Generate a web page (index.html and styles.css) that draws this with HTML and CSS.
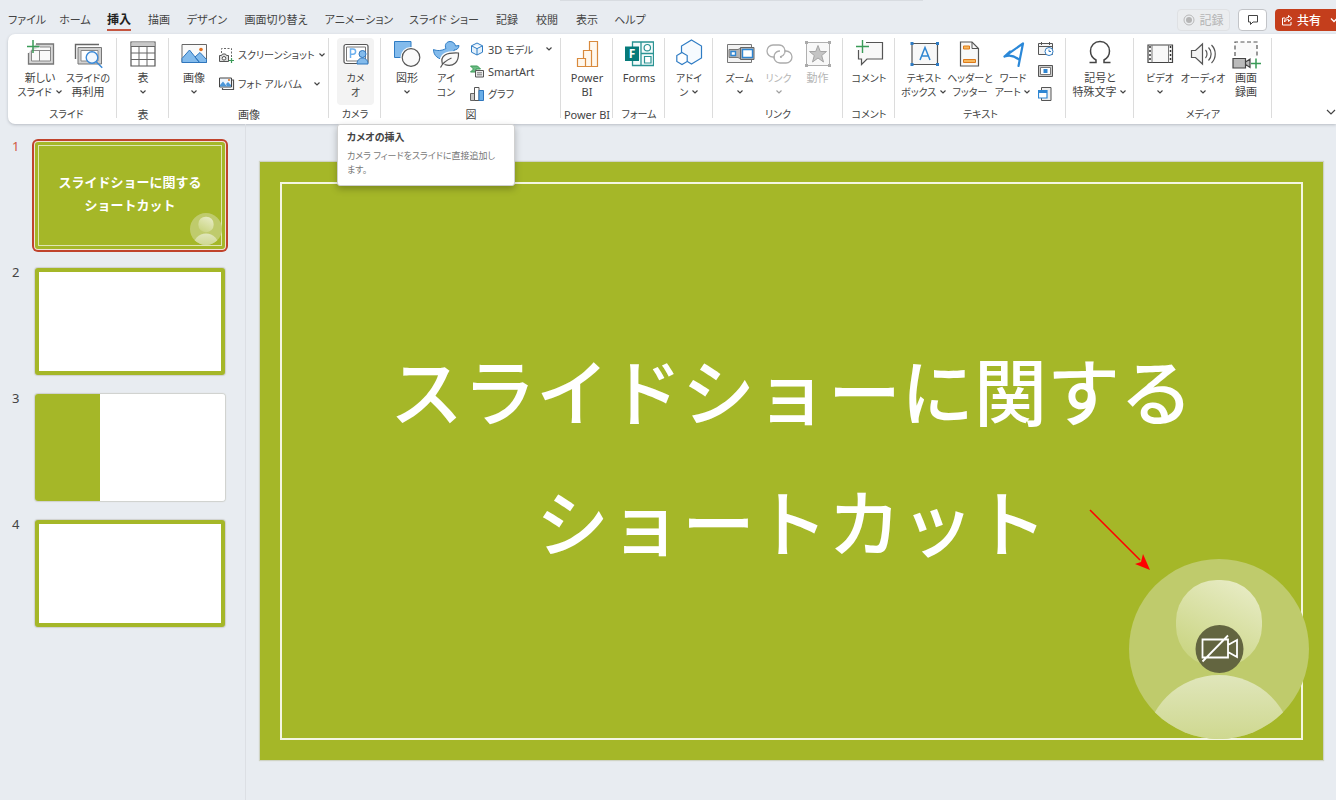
FILE: index.html
```html
<!DOCTYPE html>
<html lang="ja">
<head>
<meta charset="utf-8">
<meta name="viewport" content="width=device-width, initial-scale=1">
<title>スライドショーに関するショートカット</title>
<link rel="stylesheet" href="styles.css">
</head>
<body>
<svg class="defs" aria-hidden="true">
  <symbol id="chev" viewBox="0 0 8 8"><path d="M1.500 2.500 4 5l2.500-2.500" fill="none" stroke="#444" stroke-width="1.200"/></symbol>
  <linearGradient id="head" x1="0.800" y1="0" x2="0.300" y2="1"><stop offset="0" stop-color="#e8ecc6"/><stop offset="1" stop-color="#c9d480"/></linearGradient>
  <linearGradient id="torso" x1="0" y1="0" x2="0" y2="0.500"><stop offset="0" stop-color="#e0e6bb"/><stop offset="1" stop-color="#ccd689"/></linearGradient>
  <clipPath id="disc"><circle cx="90" cy="90" r="90"/></clipPath>
  <symbol id="person" viewBox="0 0 180 180">
    <circle cx="90" cy="90" r="90" fill="#bfcb6c"/>
    <rect x="47" y="21" width="86" height="87" rx="41" fill="url(#head)"/>
    <circle cx="90" cy="190" r="74" fill="url(#torso)" clip-path="url(#disc)"/>
  </symbol>
</svg>

<header class="topbar">
  <nav class="tabs">
    <a href="#">ファイル</a><a href="#">ホーム</a><a href="#" class="active">挿入</a><a href="#">描画</a><a href="#">デザイン</a><a href="#">画面切り替え</a><a href="#">アニメーション</a><a href="#">スライド ショー</a><a href="#">記録</a><a href="#">校閲</a><a href="#">表示</a><a href="#">ヘルプ</a>
  </nav>
  <div class="actions">
    <button class="record" disabled><svg width="12" height="12" viewBox="0 0 12 12"><circle cx="6" cy="6" r="5" fill="none" stroke="#b9b9b9"/><circle cx="6" cy="6" r="3" fill="#b5b5b5"/></svg>記録</button>
    <button class="note" aria-label="コメント"><svg width="12" height="12" viewBox="0 0 12 12"><path d="M1.500 1.500h9v6.500H6L3.500 10.500V8h-2z" fill="none" stroke="#444"/></svg></button>
    <button class="share"><svg width="12" height="12" viewBox="0 0 12 12"><path d="M4 4H1.500v7h8.500V8M3.500 8c0-3 1.500-4.500 4-4.500V1.500l3.500 3-3.500 3v-2C5.500 5.500 4.500 6.500 3.500 8z" fill="none" stroke="#fff"/></svg>共有<svg class="more" width="8" height="8" viewBox="0 0 8 8"><path d="M1 2.500 4 5.500l3-3" fill="none" stroke="#fff" stroke-width="1.300"/></svg></button>
  </div>
</header>

<section class="ribbon" aria-label="挿入">
  <div class="group g-slides">
    <div class="items">
      <button class="cmd"><svg class="ic" viewBox="0 0 30 30"><path d="M11 5h17.500v20h-25V14" fill="#d6d6d6" stroke="#777" stroke-width="1.300"/><path d="M6.500 11.500V22h19V8H15" fill="#fafafa" stroke="#888"/><path d="M6.500 11.500h19M14.500 11.500V22" fill="none" stroke="#888"/><path d="M8 1v13M2 7.500h12.500" stroke="#3a9b57" stroke-width="1.500"/></svg><span>新しい</span><span><span class="kana">スライド</span> <svg class="chev"><use href="#chev"/></svg></span></button>
      <button class="cmd"><svg class="ic" viewBox="0 0 30 30"><path d="M2.500 20V5.500H26" fill="none" stroke="#666" stroke-width="1.400"/><path d="M5 8.500h23.500V25H5z" fill="#d0d0d0" stroke="#777"/><path d="M8 11.500h17V22H8z" fill="#fff" stroke="#888"/><circle cx="19" cy="18.500" r="5.800" fill="#f2f8fe" stroke="#3b8ad8" stroke-width="1.400"/><path d="m23.200 22.700 6 6" stroke="#3b8ad8" stroke-width="1.500"/></svg><span class="kana">スライドの</span><span>再利用</span></button>
    </div>
    <div class="caption kana">スライド</div>
  </div>

  <div class="group g-one">
    <div class="items">
      <button class="cmd"><svg class="ic" viewBox="0 0 30 30"><path d="M3 3h24v24H3z" fill="#fff" stroke="#555" stroke-width="1.200"/><path d="M3.500 3.500h23V7h-23z" fill="#c8c8c8"/><path d="M3 7.500h24M3 14h24M3 20.500h24M11 7.500V27M19 7.500V27" stroke="#666" fill="none"/></svg><span>表</span><span><svg class="chev"><use href="#chev"/></svg></span></button>
    </div>
    <div class="caption">表</div>
  </div>

  <div class="group g-images">
    <div class="items">
      <button class="cmd"><svg class="ic" viewBox="0 0 30 30"><path d="M3 5.500h24.500v18H3z" fill="#fafafa" stroke="#666"/><path d="M3 19.500 10.500 11l10 12.500H3zM16 18l5-4.500 6.500 7v3H20.500z" fill="#83bbec" stroke="#2f76bd"/><circle cx="22" cy="10.500" r="1.800" fill="#e07020"/></svg><span>画像</span><span><svg class="chev"><use href="#chev"/></svg></span></button>
      <div class="stack">
        <button class="mini kana"><svg width="16" height="16" viewBox="0 0 16 16"><path d="M2.500 6V1.500h10V10" fill="none" stroke="#666" stroke-dasharray="2 1.500"/><path d="M.5 8.500h2l1-1.500h3l1 1.500h2v6h-9z" fill="#ddd" stroke="#555"/><circle cx="5" cy="11.300" r="1.800" fill="#fff" stroke="#555"/><path d="M10 13.500h5M12.500 11v5" stroke="#3a9b57" stroke-width="1.200"/></svg>スクリーンショット<svg class="chev"><use href="#chev"/></svg></button>
        <button class="mini kana"><svg width="16" height="16" viewBox="0 0 16 16"><path d="M12.500 4h2v9.500H3.500V12" fill="none" stroke="#555" stroke-width="1.200"/><path d="M.5 2h12v9H.5z" fill="#eef5fc" stroke="#444"/><path d="m1 9 3-3.500 4 5H1zM7 8l2-2 3 3v1.500H8z" fill="#4d97d8"/><circle cx="10" cy="4" r="1" fill="#e07020"/></svg>フォト アルバム<svg class="chev wide"><use href="#chev"/></svg></button>
      </div>
    </div>
    <div class="caption">画像</div>
  </div>

  <div class="group g-cameo">
    <div class="items">
      <button class="cmd hover" aria-describedby="tip"><svg class="ic" viewBox="0 0 30 30"><rect x="3" y="5.500" width="24" height="19" rx="2" fill="#fff" stroke="#555" stroke-width="1.200"/><path d="M5.500 8h19v14h-19z" fill="none" stroke="#777"/><path d="M9.500 19v-9h2.500a2.600 2.600 0 0 1 0 5.200H9.500" fill="none" stroke="#6cb0ee" stroke-width="1.500"/><circle cx="21.500" cy="15" r="3.500" fill="#83bbec" stroke="#2f76bd"/><path d="M16 25c0-8 11-8 11 0z" fill="#83bbec" stroke="#2f76bd"/></svg><span class="kana">カメ</span><span class="kana">オ</span></button>
    </div>
    <div class="caption kana">カメラ</div>
    <div class="tooltip" id="tip" role="tooltip"><strong>カメオの挿入</strong><p>カメラ フィードをスライドに直接追加し<br>ます。</p></div>
  </div>

  <div class="group g-shapes">
    <div class="items">
      <button class="cmd"><svg class="ic" viewBox="0 0 30 30"><path d="M2.500 2.500h16.500v16H2.500z" fill="#83bbec" stroke="#2f7cc4"/><circle cx="19" cy="18.500" r="10.500" fill="#fff"/><circle cx="19" cy="18.500" r="8.800" fill="#fafafa" stroke="#555" stroke-width="1.200"/></svg><span>図形</span><span><svg class="chev"><use href="#chev"/></svg></span></button>
      <button class="cmd"><svg class="ic" viewBox="0 0 30 30"><path d="M2.500 10.500c3.500 1.500 8 1.500 12.500-1-2-4 1-7 4-7s5 2 5.500 4.500l3.500-.500c0 3-2.500 4.500-5 4.500 1 6-4 9.500-9 9.500C7.500 20.500 2.500 17 2.500 10.500z" fill="#83bbec" stroke="#2f7cc4"/><path d="M11.500 25.500C8.500 16 16 13.500 27.500 14c.5 9-5 14.500-14 11.500" fill="#fff" stroke="#fff" stroke-width="4"/><path d="M11.500 25.500C8.500 16 16 13.500 27.500 14c.5 9-5 14.500-14 11.500" fill="#fafafa" stroke="#555" stroke-width="1.200"/><path d="M9.500 28.500c2-4 5-7 11-9.500" fill="none" stroke="#555" stroke-width="1.200"/></svg><span class="kana">アイ</span><span class="kana">コン</span></button>
      <div class="stack three">
        <button class="mini"><svg width="14" height="14" viewBox="0 0 14 14"><path d="m7 1 5.500 2.800v6.400L7 13l-5.500-2.800V3.800zM1.500 3.800 7 6.600l5.500-2.800M7 6.600V13" fill="#e4f1fc" stroke="#2f7cc4"/></svg><span>3D <span class="kana">モデル</span></span><svg class="chev wide"><use href="#chev"/></svg></button>
        <button class="mini"><svg width="14" height="14" viewBox="0 0 14 14"><path d="M.5 2h7l3 3H6v3H.5l3-3z" fill="#6dbb85" stroke="#3a9b57"/><path d="M5.500 6.500h8v6.500h-8z" fill="#eee" stroke="#555"/><path d="M7 8.800h5M7 10.800h5" stroke="#777"/></svg>SmartArt</button>
        <button class="mini kana"><svg width="14" height="14" viewBox="0 0 14 14"><path d="M.5 6.500h4v7h-4z" fill="#c8c8c8" stroke="#666"/><path d="M4.500.5h4.500v13H4.500z" fill="#fff" stroke="#555"/><path d="M9 3.500h4.500v10H9z" fill="#6aaee8" stroke="#2f76bd"/></svg>グラフ</button>
      </div>
    </div>
    <div class="caption">図</div>
  </div>

  <div class="group g-one">
    <div class="items">
      <button class="cmd"><svg class="ic" viewBox="0 0 30 30"><g fill="#fff8ee" stroke="#d98a3c" stroke-width="1.200"><path d="M17.500 2.500h8v25h-8z"/><path d="M11.500 11.500h8v16h-8z"/><path d="M5.500 19.500h8v8h-8z"/></g></svg><span>Power</span><span>BI</span></button>
    </div>
    <div class="caption">Power BI</div>
  </div>

  <div class="group g-one">
    <div class="items">
      <button class="cmd"><svg class="ic" viewBox="0 0 30 30"><path d="M8.500 3h21v23.500h-21zM17 3v23.500M17 14.500h12.500" fill="#f4fbfb" stroke="#2a9393" stroke-width="1.300"/><circle cx="23.300" cy="8.700" r="3.200" fill="#fff" stroke="#2a9393" stroke-width="1.200"/><path d="M20.500 17.500H27V24h-6.500z" fill="#fff" stroke="#2a9393" stroke-width="1.200"/><path d="M1 7.500h14V22H1z" fill="#067a7a"/><text x="8" y="19" text-anchor="middle" class="f">F</text></svg><span>Forms</span></button>
    </div>
    <div class="caption kana">フォーム</div>
  </div>

  <div class="group g-addin">
    <div class="items">
      <button class="cmd"><svg class="ic" viewBox="0 0 30 30"><path d="m17.500 1 10 6v12l-10 6-10-6V7z" fill="#f6fafe" stroke="#2f7cc4" stroke-width="1.200"/><path d="m8 13.500 5.200 3v6L8 25.500l-5.200-3v-6z" fill="#fff" stroke="#2f7cc4" stroke-width="1.200"/></svg><span class="kana">アドイ</span><span class="kana">ン <svg class="chev"><use href="#chev"/></svg></span></button>
    </div>
  </div>

  <div class="group g-links">
    <div class="items">
      <button class="cmd"><svg class="ic" viewBox="0 0 30 30"><path d="M2.500 5.500h24v18h-24z" fill="#f3f3f3" stroke="#777"/><path d="M4 10.500h9l4-2h3v12h-3l-4-2H4z" fill="#b4b4b4" stroke="#777"/><path d="M15.500 8.500h13.500v12H15.500z" fill="#b4b4b4" stroke="#666"/><path d="M6 12.500h4.500v4H6z" fill="#fff" stroke="#2f86d2" stroke-width="1.400"/><path d="M17.500 10.500h10v8h-10z" fill="#fff" stroke="#2f86d2" stroke-width="1.400"/></svg><span class="kana">ズーム</span><span><svg class="chev"><use href="#chev"/></svg></span></button>
      <button class="cmd" disabled><svg class="ic" viewBox="0 0 30 30"><g fill="none" stroke="#acacac" stroke-width="1.300"><path d="M11 18H9A6 6 0 0 1 9 6h6a6 6 0 0 1 5.500 8.500"/><path d="M18 18h-2"/><path d="M20 12h2a6 6 0 0 1 0 12h-6a6 6 0 0 1-5.500-8.500A6 6 0 0 1 16 12"/><path d="M20.500 14.500A6 6 0 0 1 16 18"/></g></svg><span class="kana">リンク</span><span><svg class="chev"><use href="#chev"/></svg></span></button>
      <button class="cmd" disabled><svg class="ic" viewBox="0 0 30 30"><path d="M3.500 3.500h23v23h-23z" fill="#f8f8f8" stroke="#b0b0b0"/><path d="M2 2h3v3H2zM25 2h3v3h-3zM2 25h3v3H2zM25 25h3v3h-3z" fill="#aaa"/><path d="m15 6.500 2.300 6h6.200l-4.800 4 1.800 6.500-5.500-4-5.500 4 1.800-6.500-4.800-4h6.200z" fill="#c4c4c4" stroke="#a4a4a4"/></svg><span>動作</span></button>
    </div>
    <div class="caption kana">リンク</div>
  </div>

  <div class="group g-one">
    <div class="items">
      <button class="cmd"><svg class="ic" viewBox="0 0 30 30"><path d="M12 3.500h16.500v16.500H13l-5.500 5.500V20h-3V11" fill="#f8f8f8" stroke="#555" stroke-width="1.200"/><path d="M8.500 1v13M2 7.500h13" stroke="#3a9b57" stroke-width="1.400"/></svg><span class="kana">コメント</span></button>
    </div>
    <div class="caption kana">コメント</div>
  </div>

  <div class="group g-text">
    <div class="items">
      <button class="cmd"><svg class="ic" viewBox="0 0 30 30"><path d="M3 4.500h25.500v21H3z" fill="#f8f8f8" stroke="#555" stroke-width="1.200"/><path d="M1.500 3h3v3h-3zM27 3h3v3h-3zM1.500 24h3v3h-3zM27 24h3v3h-3z" fill="#2f7cc4"/><path d="m11 21 5-12.500L21 21M12.500 17h7" fill="none" stroke="#2f86d2" stroke-width="1.500"/></svg><span class="kana">テキスト</span><span class="kana">ボックス <svg class="chev"><use href="#chev"/></svg></span></button>
      <button class="cmd"><svg class="ic" viewBox="0 0 30 30"><path d="M5.500 3h11.500l6.500 6.500V27h-18z" fill="#f8f8f8" stroke="#555" stroke-width="1.200"/><path d="M17 3v6.500h6.500" fill="none" stroke="#555"/><path d="M8.500 7h6v3h-6zM8.500 20.500h12v3h-12z" fill="#f7b85e" stroke="#dd7a1a"/></svg><span class="kana">ヘッダーと</span><span class="kana">フッター</span></button>
      <button class="cmd"><svg class="ic" viewBox="0 0 30 30"><path d="M12 12.500 6.500 17.500 25 4.500 20.500 27M6.500 17.500c5-2 10-1 15 3.500" fill="none" stroke="#2b88d8" stroke-width="2.200" stroke-linejoin="round" stroke-linecap="round"/></svg><span class="kana">ワード</span><span class="kana">アート <svg class="chev"><use href="#chev"/></svg></span></button>
      <div class="stack three">
        <button class="mini" aria-label="日付と時刻"><svg width="16" height="16" viewBox="0 0 16 16"><path d="M.5 2.500h14v11H.5zM.5 5.500h14M3.500 1v3M11.500 1v3" fill="#f4f4f4" stroke="#555"/><circle cx="11" cy="10.500" r="4" fill="#fff" stroke="#2f7cc4"/><path d="M11 8.500v2h2" fill="none" stroke="#2f7cc4"/></svg></button>
        <button class="mini" aria-label="スライド番号"><svg width="16" height="16" viewBox="0 0 16 16"><path d="M.5 2.500h14v11H.5z" fill="#ccc" stroke="#555"/><path d="M2.500 4.500h10v7h-10z" fill="#fff" stroke="#777"/><path d="M5.500 6h4v4h-4z" fill="#2f86d2"/></svg></button>
        <button class="mini" aria-label="オブジェクト"><svg width="16" height="16" viewBox="0 0 16 16"><path d="M3.500 4V1.500h9.500v13H3.500V12" fill="#eee" stroke="#555"/><path d="M.5 4.500h8.500v7.500H.5z" fill="#fff" stroke="#2f86d2" stroke-width="1.200"/><path d="M.5 5h8.500v2H.5z" fill="#2f86d2"/></svg></button>
      </div>
    </div>
    <div class="caption kana">テキスト</div>
  </div>

  <div class="group g-symbol">
    <div class="items">
      <button class="cmd"><svg class="ic" viewBox="0 0 30 30"><path d="M4.500 23.500H11v-2.500C7.500 19 5.500 16 5.500 12 5.500 6.500 9.500 2.500 15 2.500s9.500 4 9.500 9.500c0 4-2 7-5.500 9v2.500h6.500" fill="none" stroke="#444" stroke-width="1.500"/></svg><span>記号と</span><span>特殊文字 <svg class="chev"><use href="#chev"/></svg></span></button>
    </div>
  </div>

  <div class="group g-media">
    <div class="items">
      <button class="cmd"><svg class="ic" viewBox="0 0 30 30"><path d="M3 6h24.500v17.500H3z" fill="#f8f8f8" stroke="#444" stroke-width="1.200"/><path d="M7 6v17.500M23.500 6v17.500" stroke="#777"/><path d="M5 7v16M25.500 7v16" stroke="#333" stroke-width="1.500" stroke-dasharray="2 2"/></svg><span class="kana">ビデオ</span><span><svg class="chev"><use href="#chev"/></svg></span></button>
      <button class="cmd"><svg class="ic" viewBox="0 0 30 30"><path d="M3.500 11.500h4l7-6.500v20l-7-6.500h-4z" fill="#f4f4f4" stroke="#555" stroke-width="1.200"/><path d="M17.500 11c2 2 2 6 0 8M20.500 8.500c3.500 3.500 3.500 9.500 0 13M23.500 6c5 5 5 13 0 18" fill="none" stroke="#555" stroke-width="1.200"/></svg><span class="kana">オーディオ</span><span><svg class="chev"><use href="#chev"/></svg></span></button>
      <button class="cmd"><svg class="ic" viewBox="0 0 30 30"><path d="M4 17V3h22v15" fill="#fafafa" stroke="#555" stroke-width="1.200" stroke-dasharray="4 2.500"/><path d="M2 19.500h12.500V29H2zM14.500 23l4.500-3v8.500l-4.500-3z" fill="#bbb" stroke="#444" stroke-width="1.200"/><path d="M20 24.500h10M25 19.500v10" stroke="#3a9b57" stroke-width="1.500"/></svg><span>画面</span><span>録画</span></button>
    </div>
    <div class="caption kana">メディア</div>
  </div>
  <button class="collapse" aria-label="リボンを折りたたむ"><svg width="10" height="8" viewBox="0 0 10 8"><path d="m1 2 4 4 4-4" fill="none" stroke="#444" stroke-width="1.200"/></svg></button>
</section>

<main class="workspace">
  <ol class="thumbs">
    <li class="current"><span>1</span><button class="thumb title" aria-label="スライド 1"><span class="thumb-text">スライドショーに関する<br>ショートカット</span><svg class="thumb-cameo"><use href="#person"/></svg></button></li>
    <li><span>2</span><button class="thumb framed" aria-label="スライド 2"></button></li>
    <li><span>3</span><button class="thumb split" aria-label="スライド 3"></button></li>
    <li><span>4</span><button class="thumb framed" aria-label="スライド 4"></button></li>
  </ol>
  <section class="canvas">
    <article class="slide">
      <h1>スライドショーに関する<br>ショートカット</h1>
      <svg class="arrow" viewBox="0 0 62 62"><path d="m1 1 50 50" stroke="#f00" stroke-width="1.600"/><path d="m61 61-15-6 6-2 2-8z" fill="#f00"/></svg>
      <div class="cameo">
        <svg viewBox="0 0 180 180"><use href="#person"/><circle cx="90.500" cy="90" r="24" fill="#636540"/><g fill="none" stroke="#fff" stroke-width="1.800"><path d="M73.500 80.500H99V98.500H73.500zM99 86l9-5v17l-9-5M73.500 102.500 99 76.500"/></g></svg>
      </div>
    </article>
  </section>
</main>
</body>
</html>
```

FILE: styles.css
```css
* { box-sizing: border-box; }

body {
  margin: 0;
  min-height: 100vh;
  display: flex;
  flex-direction: column;
  overflow-x: hidden;
  background: #e8ecf1;
  color: #444;
  font-family: "Noto Sans", "Noto Sans CJK JP", sans-serif;
  font-size: 11px;
  font-feature-settings: "palt";
}

button {
  margin: 0;
  padding: 0;
  border: 0;
  background: none;
  color: inherit;
  font: inherit;
  font-feature-settings: inherit;
  white-space: nowrap;
}

.defs { position: absolute; width: 0; height: 0; }

/* Top bar */
.topbar {
  display: flex;
  justify-content: space-between;
  height: 34px;
  padding-left: 3px;
  background: linear-gradient(#d8dce1, #d8dce1) 560px 0 / 363px 1px no-repeat;
}

.tabs {
  display: grid;
  grid-template-columns: 48px 48px 40px 40px 56px 82px 84px 86px 40px 40px 40px 46px;
  padding-top: 10px;
}

.tabs a {
  justify-self: center;
  height: 21px;
  line-height: 20px;
  color: #444;
  text-decoration: none;
  white-space: nowrap;
  font-size: 11px;
}

.tabs .active {
  border-bottom: 2px solid #c4553f;
  color: #222;
  font-size: 12px;
  font-weight: 700;
}

.actions { display: flex; gap: 8px; padding-top: 9px; }

.actions button {
  display: flex;
  align-items: center;
  justify-content: center;
  gap: 4px;
  height: 22px;
  border-radius: 4px;
  font-size: 12px;
}

.actions svg { flex: none; }
.actions .record { width: 53px; border: 1px solid #dfe1e4; background: #ebedef; color: #b5b5b5; }
.actions .note { width: 29px; border: 1px solid #c2c4c8; background: #fff; }
.actions .share { width: 61px; border-radius: 4px 0 0 4px; background: #c43e1c; color: #fff; font-weight: 500; justify-content: flex-start; padding-left: 6px; overflow: hidden; }
.share .more { margin-left: 5px; }

/* Ribbon */
.ribbon {
  display: flex;
  height: 90px;
  margin-left: 8px;
  border-radius: 7px 0 0 7px;
  background: #fff;
  box-shadow: 0 1px 3px #b8bdc4;
}

.group {
  position: relative;
  display: flex;
  flex: none;
  flex-direction: column;
  padding-top: 4px;
}

.group::after {
  content: "";
  position: absolute;
  top: 4px;
  right: 0;
  bottom: 6px;
  width: 1px;
  background: #dcdcdc;
}

.items { display: grid; height: 67px; }
.caption { height: 19px; line-height: 19px; text-align: center; white-space: nowrap; }
.kana { font-size: 10px; }

.g-slides { width: 109px; padding-left: 8px; }
.g-slides .items { grid-template-columns: 48px 48px; }
.g-one { width: 52px; }
.g-images { width: 160px; }
.g-images .items { grid-template-columns: 50px 1fr; }
.g-cameo { width: 52px; }
.g-cameo .items { padding: 0 7px 0 8px; }
.g-shapes { width: 180px; }
.g-shapes .items { grid-template-columns: 46px 32px 1fr; padding-left: 3px; }
.g-shapes .stack { padding-left: 8px; }
.g-addin { width: 48px; }
.g-links { width: 130px; }
.g-links .items { grid-template-columns: 39px 39px 39px; padding-left: 7px; }
.g-text { width: 171px; }
.g-text .items { grid-template-columns: 52px 40px 46px 20px; padding-left: 3px; }
.g-symbol { width: 68px; }
.g-media { width: 138px; }
.g-media .items { grid-template-columns: 52px 34px 52px; }

.cmd {
  display: flex;
  flex-direction: column;
  align-items: center;
  min-width: 0;
  padding-top: 1px;
  border-radius: 4px;
  line-height: 14px;
}

.cmd > span { height: 14px; }
.cmd .ic { width: 30px; height: 30px; margin-bottom: 2px; flex: none; }
.cmd.hover { background: #f3f3f3; }
.cmd:disabled { color: #b5b5b5; }
.cmd:disabled .chev { opacity: 0.5; }
.chev { width: 8px; height: 8px; }
.f { fill: #fff; font: 700 12px "Noto Sans", sans-serif; }

.stack { display: flex; flex-direction: column; padding-top: 2px; }
.stack.three { justify-content: space-around; padding-top: 0; }
.mini { display: flex; align-items: center; gap: 3px; height: 29px; }
.three .mini { gap: 4px; height: 22px; }
.g-text .mini { justify-content: center; }
.mini .wide { margin-left: 8px; }

.collapse { display: flex; align-items: flex-end; margin-left: auto; padding-bottom: 8px; }

.tooltip {
  position: absolute;
  top: 90px;
  left: 8px;
  z-index: 2;
  width: 178px;
  padding: 5px 0 8px 9px;
  border: 1px solid #d0d0d0;
  border-radius: 3px;
  background: #fff;
  box-shadow: 0 3px 7px rgba(0, 0, 0, 0.25);
  line-height: 14px;
  white-space: nowrap;
}

.tooltip strong { font-size: 10px; }
.tooltip p { margin: 5px 0 0; color: #777; font-size: 9px; }

/* Workspace */
.workspace { display: flex; flex: 1; }

.thumbs {
  display: flex;
  flex: none;
  flex-direction: column;
  gap: 19px;
  width: 246px;
  margin: 0;
  padding: 18px 0 0;
  border-right: 1px solid #dcdfe4;
  list-style: none;
}

.thumbs li { display: grid; grid-template-columns: 35px 190px; font-size: 13px; }
.thumbs li > span { padding-left: 12px; line-height: 8px; }
.thumbs .current > span { color: #d05a42; }

.thumb {
  display: block;
  position: relative;
  height: 107px;
  border-radius: 3px;
  background: #fff;
  box-shadow: 0 0 1px 1px #cfd1cc;
}

.thumb.framed { border: 4px solid #a5b728; }
.thumb.split { background: linear-gradient(90deg, #a5b728 34%, #fff 34%); }

.thumb.title {
  padding-bottom: 4px;
  border: 3px solid #a5b728;
  background: #a5b728;
  box-shadow: 0 0 0 1px #f0e4d8, 0 0 0 3px #c0432c;
  outline: 1px solid #dfe5b4;
  outline-offset: -4px;
}

.thumb-text { color: #fff; font-size: 13px; font-weight: 700; line-height: 23px; font-feature-settings: normal; }
.thumb-cameo { position: absolute; right: 0; bottom: 1px; width: 32px; height: 32px; }

.canvas { flex: 1; min-width: 0; padding: 38px 13px 40px 14px; }

.slide {
  position: relative;
  display: grid;
  place-items: center;
  aspect-ratio: 16 / 9;
  padding: 20px;
  background: #a5b728;
  box-shadow: 0 0 1px 1px #cfd3c4;
}

.slide::before {
  content: "";
  grid-area: 1 / 1;
  place-self: stretch;
  border: 2px solid #f4f6e2;
}

.slide h1 {
  grid-area: 1 / 1;
  margin: 0;
  padding-bottom: 8px;
  color: #fff;
  font-size: 73px;
  font-weight: 500;
  line-height: 131px;
  text-align: center;
  white-space: nowrap;
  font-feature-settings: normal;
}

.arrow { position: absolute; right: 172px; bottom: 189px; width: 62px; height: 62px; }
.cameo { position: absolute; right: 14px; bottom: 21px; width: 180px; height: 180px; }
```
